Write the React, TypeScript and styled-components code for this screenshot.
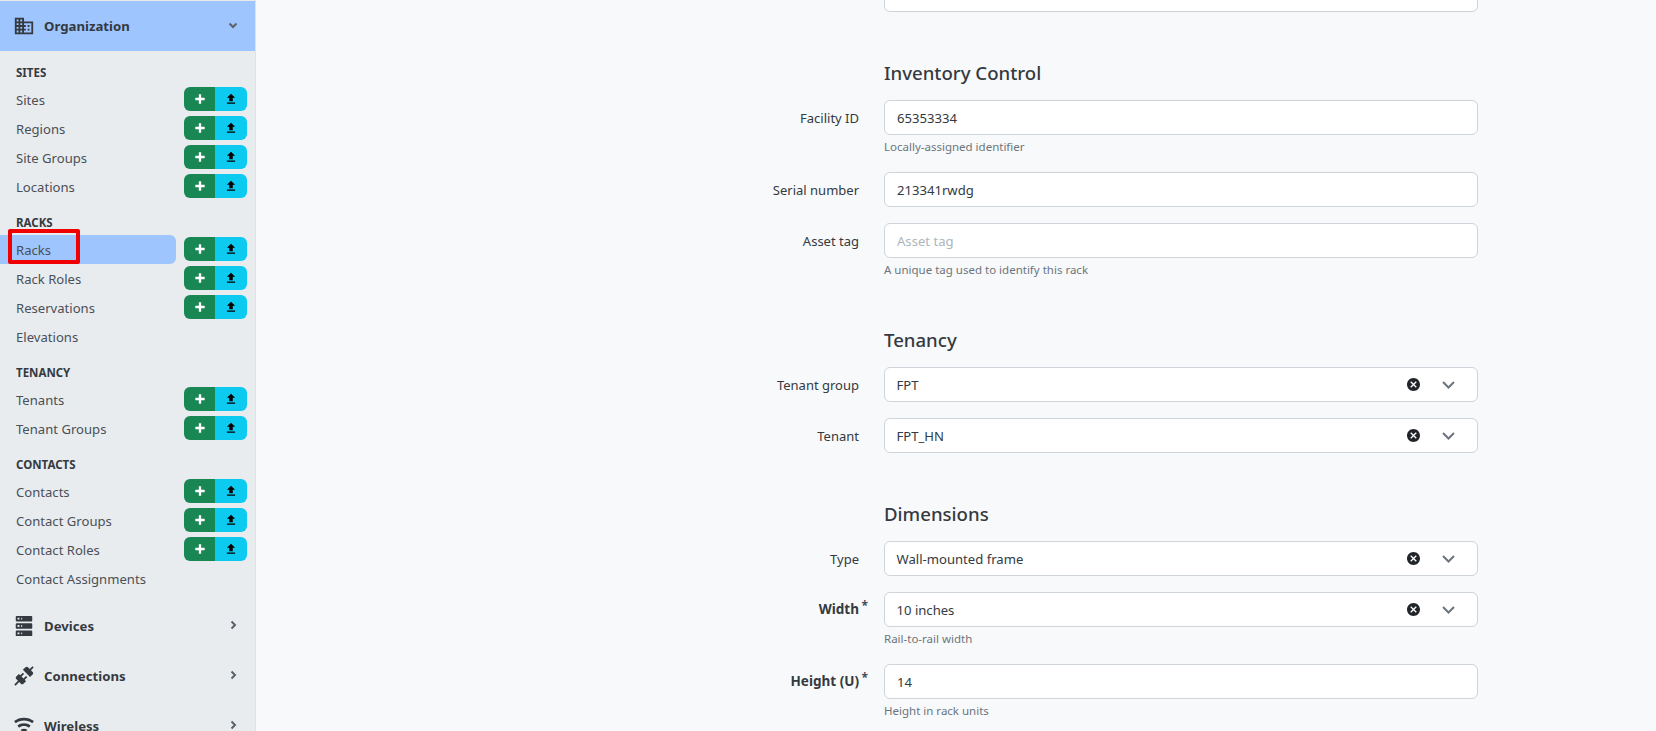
import React from "react";
import styled, { createGlobalStyle } from "styled-components";

const Global = createGlobalStyle`
  html, body { margin: 0; padding: 0; height: 100%; overflow: hidden; background: #f8f9fa; }
  body { font-family: "Noto Sans", "Open Sans", "Liberation Sans", sans-serif; font-size: 13px; color: #343a40; }
  * { box-sizing: border-box; }
`;

const Page = styled.div`display: flex; height: 731px; overflow: hidden;`;
const Sidebar = styled.aside`
  width: 256px; flex: none; height: 731px; overflow: hidden; padding-top: 1px;
  background: #e9ecef; border-right: 1px solid #dee2e6;
`;
const NavHead = styled.div<{ $open?: boolean }>`
  display: flex; align-items: center; height: 50px; padding: 0 16px 0 13px;
  background: ${p => (p.$open ? "#9ec5fe" : "transparent")};
  font-weight: 700; color: #343a40; font-size: 13.2px;
`;
const NavIcon = styled.svg`width: 22px; height: 22px; fill: #343a40; flex: none;`;
const NavLabel = styled.span`flex: 1; margin-left: 9px;`;
const Chevron = styled.svg`width: 12px; height: 12px; fill: none; stroke: #5b6269; stroke-width: 2; flex: none; margin-top: -2px;`;
const Groups = styled.div`padding: 10px 8px 8px 0;`;
const Group = styled.section`
  margin-bottom: 10px;
  &:last-child { margin-bottom: 0; }
`;
const GroupTitle = styled.div`
  height: 21px; line-height: 23px; margin-bottom: 3px; padding-left: 16px;
  font-size: 11.5px; font-weight: 700; text-transform: uppercase; color: #343a40;
`;
const Row = styled.div`position: relative; display: flex; align-items: center; height: 29px;`;
const RowLink = styled.div<{ $active?: boolean }>`
  width: 176px; height: 29px; line-height: 30px; padding-left: 16px;
  color: #495057; font-size: 13.1px; white-space: nowrap;
  background: ${p => (p.$active ? "#9ec5fe" : "transparent")};
  border-radius: 0 6px 6px 0;
`;
const BtnGroup = styled.div`display: flex; margin-left: 8px; margin-top: -1px; height: 24px; border-radius: 6px; overflow: hidden;`;
const Btn = styled.div<{ $bg: string; $w: number }>`
  width: ${p => p.$w}px; display: flex; align-items: center; justify-content: center; background: ${p => p.$bg};
`;
const BtnIcon = styled.svg<{ $fill: string }>`width: 14px; height: 14px; fill: ${p => p.$fill};`;
const Highlight = styled.div`
  position: absolute; left: 8px; top: -6px; width: 72px; height: 35px;
  border: 4px solid #f00000; border-radius: 2px; pointer-events: none;
`;

const Main = styled.main`flex: 1; min-width: 0; height: 731px; overflow: hidden; padding-right: 178px;`;
const Form = styled.div`width: 841px; margin-left: auto; margin-top: -23px;`;
const Section = styled.section`padding-bottom: 30px;`;
const Heading = styled.h2`
  margin: 0 0 12px 247px; padding-left: 0; height: 30px; line-height: 30px;
  font-size: 18.6px; font-weight: 500; color: #343a40;
`;
const Field = styled.div`
  display: grid; grid-template-columns: 222px 594px; column-gap: 25px; margin-bottom: 16px; align-items: start;
`;
const Label = styled.label<{ $req?: boolean }>`
  position: relative; text-align: right; line-height: ${p => (p.$req ? "35px" : "37px")}; height: 35px; color: #343a40;
  font-size: ${p => (p.$req ? "13.5px" : "13px")}; font-weight: ${p => (p.$req ? 700 : 400)};
`;
const Star = styled.span`
  position: absolute; right: -9px; top: -4px; font-size: 12px; font-weight: 700; color: #495057;
`;
const Control = styled.div``;
const Box = styled.div<{ $ph?: boolean }>`
  display: flex; align-items: center; height: 35px; padding: 0 22px 0 12px; background: #fff;
  border: 1px solid #ced4da; border-radius: 6px; font-size: 13.1px;
  color: ${p => (p.$ph ? "#adb5bd" : "#343a40")};
`;
const BoxText = styled.span`flex: 1; margin-left: -0.5px;`;
const Clear = styled.svg`width: 13px; height: 13px; fill: #212529; margin-right: 22px;`;
const Caret = styled.svg`width: 13px; height: 13px; fill: none; stroke: #6c757d; stroke-width: 2;`;
const Help = styled.div`margin-top: 4px; height: 17px; line-height: 15px; font-size: 11.5px; color: #6c757d;`;

const P = {
  domain: "M18,15H16V17H18M18,11H16V13H18M20,19H12V17H14V15H12V13H14V11H12V9H20M10,7H8V5H10M10,11H8V9H10M10,15H8V13H10M10,19H8V17H10M6,7H4V5H6M6,11H4V9H6M6,15H4V13H6M6,19H4V17H6M12,7V3H2V21H22V7H12Z",
  server: "M4,1H20A1,1 0 0,1 21,2V6A1,1 0 0,1 20,7H4A1,1 0 0,1 3,6V2A1,1 0 0,1 4,1M4,9H20A1,1 0 0,1 21,10V14A1,1 0 0,1 20,15H4A1,1 0 0,1 3,14V10A1,1 0 0,1 4,9M4,17H20A1,1 0 0,1 21,18V22A1,1 0 0,1 20,23H4A1,1 0 0,1 3,22V18A1,1 0 0,1 4,17M9,5H10V3H9V5M9,13H10V11H9V13M9,21H10V19H9V21M5,3V5H7V3H5M5,11V13H7V11H5M5,19V21H7V19H5Z",
  connection: "M21.4 7.5C22.2 8.3 22.2 9.6 21.4 10.3L18.6 13.1L10.8 5.3L13.6 2.5C14.4 1.7 15.7 1.7 16.4 2.5L18.2 4.3L21.2 1.3L22.6 2.7L19.6 5.7L21.4 7.5M15.6 13.3L14.2 11.9L11.4 14.7L9.3 12.6L12.1 9.8L10.7 8.4L7.9 11.2L6.4 9.8L3.6 12.6C2.8 13.4 2.8 14.7 3.6 15.4L5.4 17.2L1.4 21.2L2.8 22.6L6.8 18.6L8.6 20.4C9.4 21.2 10.7 21.2 11.4 20.4L14.2 17.6L12.8 16.2L15.6 13.3Z",
  wifi: "M12,21L15.6,16.2C14.6,15.45 13.35,15 12,15C10.65,15 9.4,15.45 8.4,16.2L12,21M12,3C7.95,3 4.21,4.34 1.2,6.6L3,9C5.5,7.12 8.62,6 12,6C15.38,6 18.5,7.12 21,9L22.8,6.6C19.79,4.34 16.05,3 12,3M12,9C9.3,9 6.81,9.89 4.8,11.4L6.6,13.8C8.1,12.67 9.97,12 12,12C14.03,12 15.9,12.67 17.4,13.8L19.2,11.4C17.19,9.89 14.7,9 12,9Z",
  plus: "M20 14H14V20H10V14H4V10H10V4H14V10H20V14Z",
  upload: "M9,16V10H5L12,3L19,10H15V16H9M5,20V18H19V20H5Z",
  close: "M12,2C17.53,2 22,6.47 22,12C22,17.53 17.53,22 12,22C6.47,22 2,17.53 2,12C2,6.47 6.47,2 12,2M15.59,7L12,10.59L8.41,7L7,8.41L10.59,12L7,15.59L8.41,17L12,13.41L15.59,17L17,15.59L13.41,12L17,8.41L15.59,7Z",
};

const groups = [
  { title: "Sites", items: [["Sites", 1], ["Regions", 1], ["Site Groups", 1], ["Locations", 1]] },
  { title: "Racks", items: [["Racks", 1], ["Rack Roles", 1], ["Reservations", 1], ["Elevations", 0]] },
  { title: "Tenancy", items: [["Tenants", 1], ["Tenant Groups", 1]] },
  { title: "Contacts", items: [["Contacts", 1], ["Contact Groups", 1], ["Contact Roles", 1], ["Contact Assignments", 0]] },
] as const;

const Nav = ({ icon, label, open }: { icon: string; label: string; open?: boolean }) => (
  <NavHead $open={open}>
    <NavIcon viewBox="0 0 24 24"><path d={icon} /></NavIcon>
    <NavLabel>{label}</NavLabel>
    <Chevron viewBox="0 0 12 12">
      <path d={open ? "M2.5 4.5 6 8l3.5-3.5" : "M4.5 2.5 8 6 4.5 9.5"} />
    </Chevron>
  </NavHead>
);

const Select = ({ value }: { value: string }) => (
  <Box>
    <BoxText>{value}</BoxText>
    <Clear viewBox="2 2 20 20"><path d={P.close} /></Clear>
    <Caret viewBox="0 0 13 13"><path d="M1 4l5.5 5.5L12 4" /></Caret>
  </Box>
);

const FormField = ({ label, req, help, children }: { label: string; req?: boolean; help?: string; children: React.ReactNode }) => (
  <Field>
    <Label $req={req}>{label}{req && <Star>*</Star>}</Label>
    <Control>
      {children}
      {help && <Help>{help}</Help>}
    </Control>
  </Field>
);

export default function App() {
  return (
    <Page>
      <Global />
      <Sidebar>
        <Nav icon={P.domain} label="Organization" open />
        <Groups>
          {groups.map(g => (
            <Group key={g.title}>
              <GroupTitle>{g.title}</GroupTitle>
              {g.items.map(([name, btn]) => (
                <Row key={name}>
                  <RowLink $active={name === "Racks"}>{name}</RowLink>
                  {btn === 1 && (
                    <BtnGroup>
                      <Btn $bg="#198754" $w={31}><BtnIcon $fill="#fff" viewBox="0 0 24 24"><path d={P.plus} /></BtnIcon></Btn>
                      <Btn $bg="#0dcaf0" $w={32}><BtnIcon $fill="#000" viewBox="0 0 24 24"><path d={P.upload} /></BtnIcon></Btn>
                    </BtnGroup>
                  )}
                  {name === "Racks" && <Highlight />}
                </Row>
              ))}
            </Group>
          ))}
        </Groups>
        <Nav icon={P.server} label="Devices" />
        <Nav icon={P.connection} label="Connections" />
        <Nav icon={P.wifi} label="Wireless" />
      </Sidebar>
      <Main>
        <Form>
          <Section>
            <Field>
              <span />
              <Box />
            </Field>
          </Section>
          <Section>
            <Heading>Inventory Control</Heading>
            <FormField label="Facility ID" help="Locally-assigned identifier"><Box>65353334</Box></FormField>
            <FormField label="Serial number"><Box>213341rwdg</Box></FormField>
            <FormField label="Asset tag" help="A unique tag used to identify this rack"><Box $ph>Asset tag</Box></FormField>
          </Section>
          <Section>
            <Heading>Tenancy</Heading>
            <FormField label="Tenant group"><Select value="FPT" /></FormField>
            <FormField label="Tenant"><Select value="FPT_HN" /></FormField>
          </Section>
          <Section>
            <Heading>Dimensions</Heading>
            <FormField label="Type"><Select value="Wall-mounted frame" /></FormField>
            <FormField label="Width" req help="Rail-to-rail width"><Select value="10 inches" /></FormField>
            <FormField label="Height (U)" req help="Height in rack units"><Box>14</Box></FormField>
          </Section>
        </Form>
      </Main>
    </Page>
  );
}
